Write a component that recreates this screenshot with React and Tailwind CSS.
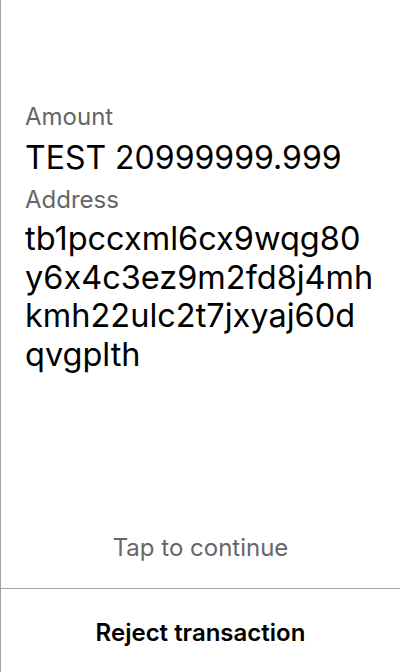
export default function App() {
  return (
    <div
      className="h-[672px] w-[400px] flex flex-col bg-white border-l border-[#a3a3a3] text-black [font-feature-settings:'calt'_0]"
      style={{ fontFamily: 'Inter, "Noto Sans", sans-serif' }}
    >
      <div className="flex-1 flex flex-col pl-6 pr-6 pt-[101px]">
        <div className="text-[24px] leading-8 text-[#666666]">Amount</div>
        <div className="text-[32px] leading-[40px] mt-[5px]">TEST 20999999.999</div>
        <div className="text-[24px] leading-8 text-[#666666] mt-[6px]">Address</div>
        <div className="w-[349px] text-[32.5px] leading-[38.5px] break-all mt-[4px]">
          tb1pccxml6cx9wqg80y6x4c3ez9m2fd8j4mhkmh22ulc2t7jxyaj60dqvgplth
        </div>
        <div className="flex-1" />
        <div className="text-center text-[24px] leading-8 text-[#666666] pb-[24px]">Tap to continue</div>
      </div>
      <div className="border-t border-[#a3a3a3] h-[84px] pt-[28px] flex justify-center">
        <span className="text-[24px] leading-8 font-semibold">Reject transaction</span>
      </div>
    </div>
  );
}
